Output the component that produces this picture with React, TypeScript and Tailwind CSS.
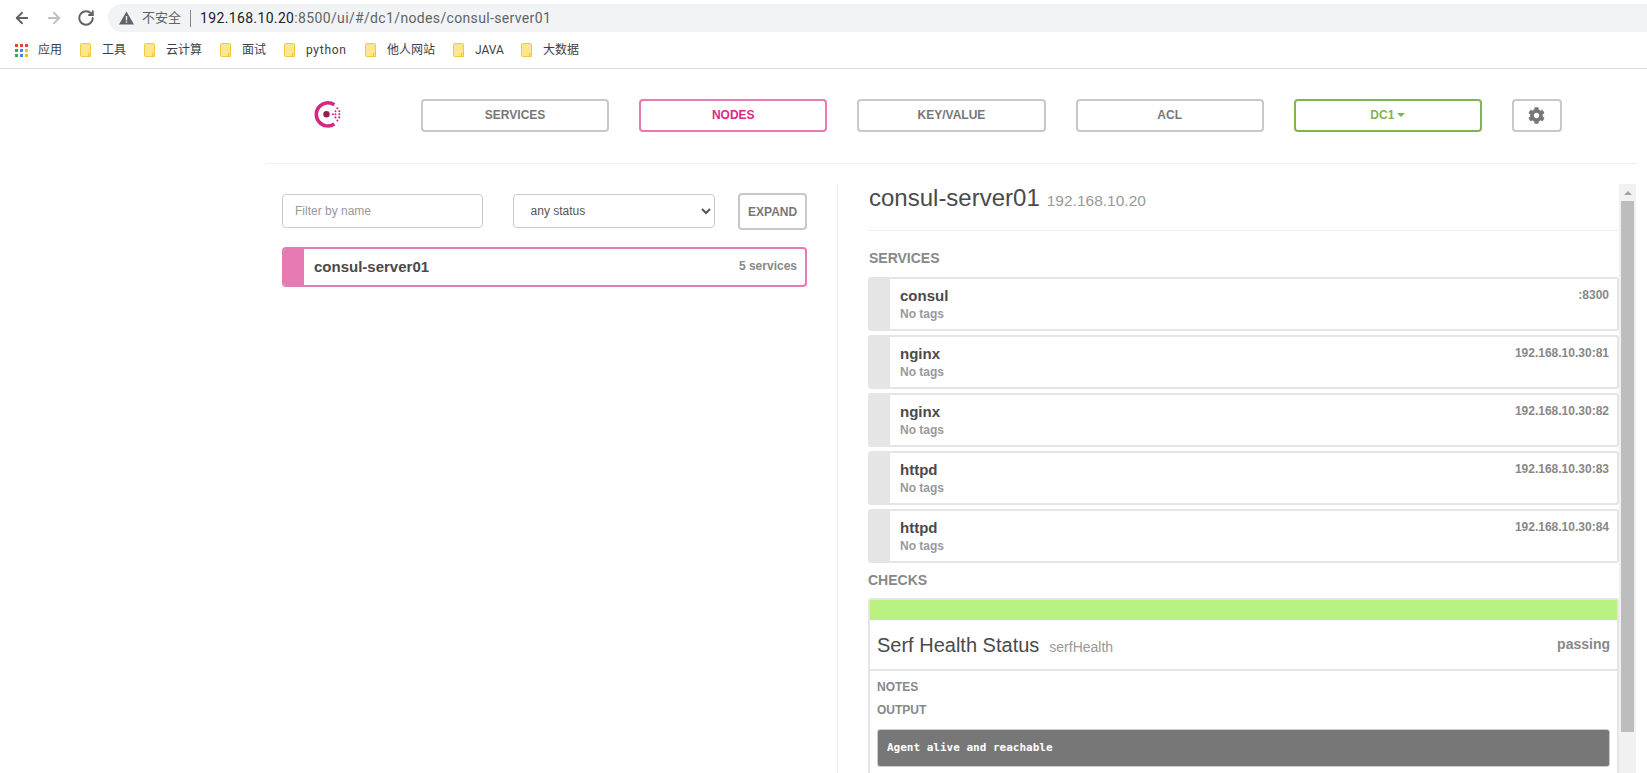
import { ArrowLeft, ArrowRight, RotateCw } from 'lucide-react';
import { FaCog } from 'react-icons/fa';

const bookmarks = [
  { label: '工具', width: 'w-[64px]', extra: '' },
  { label: '云计算', width: 'w-[76px]', extra: '' },
  { label: '面试', width: 'w-[64px]', extra: '' },
  { label: 'python', width: 'w-[81px]', extra: 'tracking-[0.7px]' },
  { label: '他人网站', width: 'w-[88px]', extra: '' },
  { label: 'JAVA', width: 'w-[68px]', extra: '' },
  { label: '大数据', width: 'w-[70px]', extra: '' },
];

const services = [
  { name: 'consul', port: ':8300' },
  { name: 'nginx', port: '192.168.10.30:81' },
  { name: 'nginx', port: '192.168.10.30:82' },
  { name: 'httpd', port: '192.168.10.30:83' },
  { name: 'httpd', port: '192.168.10.30:84' },
];

const navItems = ['SERVICES', 'NODES', 'KEY/VALUE', 'ACL'];

const AppsIcon = () => {
  const colors = ['#ea4335', '#ea4335', '#ea4335', '#34a853', '#4285f4', '#fbbc05', '#34a853', '#4285f4', '#fbbc05'];
  return (
    <div className="grid grid-cols-3 gap-[2px] w-[13px] h-[13px]">
      {colors.map((c, i) => (
        <span key={i} className="w-[3px] h-[3px]" style={{ backgroundColor: c }} />
      ))}
    </div>
  );
};

const Folder = () => (
  <svg width="11" height="14" viewBox="0 0 11 14" className="shrink-0">
    <path d="M0.5 1.5a1 1 0 0 1 1-1h8a1 1 0 0 1 1 1v12h-9a1 1 0 0 1-1-1z" fill="#fee68f" stroke="#f0c93f" />
    <path d="M8.5 13.5v-3h2.5" fill="none" stroke="#f0c93f" />
  </svg>
);

const ConsulLogo = () => (
  <svg width="31" height="31" viewBox="0 0 30 30" className="shrink-0">
    <path d="M21.6 5.6a11.2 11.2 0 1 0 0 18.6" fill="none" stroke="#d62783" strokeWidth="3.4" />
    <circle cx="14" cy="14.8" r="3.1" fill="#961d59" />
    <g fill="#d62783">
      <circle cx="20.2" cy="14.8" r="1" />
      <circle cx="24.6" cy="8.9" r="1" />
      <circle cx="22.7" cy="11.8" r="1" />
      <circle cx="26.4" cy="11.8" r="1" />
      <circle cx="22.7" cy="14.8" r="1" />
      <circle cx="26.4" cy="14.8" r="1" />
      <circle cx="22.7" cy="17.8" r="1" />
      <circle cx="26.4" cy="17.8" r="1" />
      <circle cx="24.6" cy="20.8" r="1" />
    </g>
  </svg>
);

const App = () => {
  return (
    <div className="h-screen overflow-hidden bg-white font-['Liberation_Sans',sans-serif]">
      {/* browser chrome */}
      <div className="h-[69px] border-b border-[#dadce0] font-['Roboto','Noto_Sans_CJK_SC',sans-serif]">
        <div className="flex items-center h-[36px]">
          <div className="flex items-center w-[108px] pl-[13px] gap-[14px]">
            <ArrowLeft className="w-[18px] h-[18px] text-[#5f6368]" strokeWidth={2.4} />
            <ArrowRight className="w-[18px] h-[18px] text-[#bfc1c4]" strokeWidth={2.4} />
            <RotateCw className="w-[18px] h-[18px] text-[#5f6368]" strokeWidth={2.6} />
          </div>
          <div className="flex items-center flex-1 h-[28px] bg-[#f1f3f4] rounded-l-[14px] pl-[11px] text-[14px]">
            <svg width="15" height="14" viewBox="0 0 15 14" className="shrink-0">
              <path d="M7.5 0.5L15 13.5H0z" fill="#5f6368" />
              <rect x="6.8" y="5" width="1.4" height="4.4" fill="#f1f3f4" />
              <rect x="6.8" y="10.3" width="1.4" height="1.4" fill="#f1f3f4" />
            </svg>
            <span className="ml-[8px] text-[#5f6368] text-[13px]">不安全</span>
            <span className="ml-[9px] w-px h-[17px] bg-[#80868b]" />
            <span className="ml-[9px] text-[#202124] tracking-[0.35px]">192.168.10.20</span>
            <span className="text-[#5f6368] tracking-[0.35px]">:8500/ui/#/dc1/nodes/consul-server01</span>
          </div>
        </div>
        <div className="flex items-center h-[28px] pl-[15px] text-[12px] text-[#3c4043]">
          <div className="flex items-center w-[65px]">
            <AppsIcon />
            <span className="ml-[10px]">应用</span>
          </div>
          {bookmarks.map((b) => (
            <div key={b.label} className={`flex items-center ${b.width}`}>
              <Folder />
              <span className={`ml-[11px] ${b.extra}`}>{b.label}</span>
            </div>
          ))}
        </div>
      </div>

      <div className="ml-[266px] w-[1371px]">
        {/* nav */}
        <div className="flex items-start h-[95px] pt-[30px] border-b border-[#eeeeee]">
          <div className="w-[155px] pl-[46px]">
            <ConsulLogo />
          </div>
          <div className="flex gap-[30px]">
            {navItems.map((item) => (
              <button
                key={item}
                className={`w-[188.2px] h-[33px] pb-[2px] rounded-[4px] border-2 bg-white text-[12px] font-bold ${
                  item === 'NODES' ? 'border-[#e67ab2] text-[#db2a85]' : 'border-[#c8c8c8] text-[#777777]'
                }`}
              >
                {item}
              </button>
            ))}
            <button className="flex items-center justify-center gap-[3px] w-[188.2px] h-[33px] pb-[2px] rounded-[4px] border-2 border-[#7fb550] bg-white text-[12px] font-bold text-[#7fb550]">
              DC1
              <span className="w-0 h-0 border-x-[4px] border-x-transparent border-t-[4px] border-t-[#7fb550]" />
            </button>
            <button className="flex items-center justify-center w-[50px] h-[33px] rounded-[4px] border-2 border-[#c8c8c8] bg-white text-[#777777]">
              <FaCog className="w-[17px] h-[17px]" />
            </button>
          </div>
        </div>

        <div className="flex">
          {/* node list */}
          <div className="w-[571px] pl-[16px] pr-[30px] pt-[30px]">
            <div className="flex items-start">
              <input
                placeholder="Filter by name"
                className="w-[201px] h-[34px] rounded-[4px] border border-[#cccccc] px-[12px] text-[12px] text-[#555555] placeholder:text-[#999999] outline-none"
              />
              <select className="ml-[30px] w-[203px] h-[34px] rounded-[4px] border border-[#cccccc] bg-white pl-[13px] text-[12px] text-[#555555]">
                <option>any status</option>
              </select>
              <button className="ml-[23px] w-[69px] h-[37px] -mt-[1px] rounded-[4px] border-2 border-[#c8c8c8] bg-white text-[12px] font-bold text-[#777777]">
                EXPAND
              </button>
            </div>
            <div className="flex mt-[17px] h-[40px] rounded-[4px] border-2 border-[#e67ab2] overflow-hidden">
              <div className="w-[20px] bg-[#e67ab2]" />
              <div className="flex flex-1 items-center justify-between pl-[10px] pr-[8px]">
                <span className="text-[15px] font-bold text-[#4a4a4a]">consul-server01</span>
                <span className="text-[12px] font-bold text-[#888888] -mt-[2px]">5 services</span>
              </div>
            </div>
          </div>

          {/* node detail */}
          <div className="flex mt-[20px] h-[600px] border-l border-[#eeeeee]">
            <div className="w-[751px] ml-[30px] overflow-hidden">
              <div className="h-[47px] pl-[1px] border-b border-[#eeeeee]">
                <span className="text-[24px] leading-[28px] text-[#4a4a4a]">consul-server01</span>
                <span className="ml-[7px] text-[15.5px] text-[#999999]">192.168.10.20</span>
              </div>
              <h4 className="mt-[19px] h-[27px] pl-[1px] text-[14px] leading-[16px] font-bold text-[#888888]">SERVICES</h4>
              {services.map((s, i) => (
                <div key={i} className="flex h-[54px] mb-[4px] rounded-[3px] border-2 border-[#e5e5e5]">
                  <div className="w-[20px] bg-[#e5e5e5]" />
                  <div className="flex flex-1 justify-between pl-[10px] pr-[8px] pt-[8px]">
                    <div>
                      <div className="text-[15px] leading-[18px] font-bold text-[#4a4a4a]">{s.name}</div>
                      <div className="text-[12px] leading-[18px] font-bold text-[#999999]">No tags</div>
                    </div>
                    <div className="mt-[1px] text-[12px] leading-[14px] font-bold text-[#888888]">{s.port}</div>
                  </div>
                </div>
              ))}
              <h4 className="mt-[9px] h-[26px] text-[14px] leading-[16px] font-bold text-[#888888]">CHECKS</h4>
              <div className="rounded-[3px] border-2 border-[#e5e5e5] pb-[30px]">
                <div className="h-[20px] bg-[#b9f281]" />
                <div className="flex items-center justify-between h-[51px] px-[7px] border-b-2 border-[#e5e5e5]">
                  <div>
                    <span className="text-[20px] text-[#4a4a4a]">Serf Health Status</span>
                    <span className="ml-[10px] text-[14px] text-[#999999]">serfHealth</span>
                  </div>
                  <span className="text-[14px] font-bold text-[#888888]">passing</span>
                </div>
                <div className="px-[7px] pt-[9px]">
                  <div className="h-[23px] text-[12px] leading-[14px] font-bold text-[#888888]">NOTES</div>
                  <div className="h-[26px] text-[12px] leading-[14px] font-bold text-[#888888]">OUTPUT</div>
                  <pre className="h-[38px] rounded-[3px] border border-[#cccccc] bg-[#777777] pl-[9px] leading-[36px] font-['DejaVu_Sans_Mono',monospace] text-[11px] font-bold text-white">
                    Agent alive and reachable
                  </pre>
                </div>
              </div>
            </div>
            {/* pane scrollbar */}
            <div className="w-[17px] bg-[#f1f1f1] flex flex-col items-center">
              <div className="h-[17px] flex items-center justify-center">
                <span className="w-0 h-0 border-x-[4px] border-x-transparent border-b-[4px] border-b-[#a3a3a3]" />
              </div>
              <div className="w-[13px] h-[531px] bg-[#bdbdbd]" />
            </div>
          </div>
        </div>
      </div>
    </div>
  );
};

export default App;
